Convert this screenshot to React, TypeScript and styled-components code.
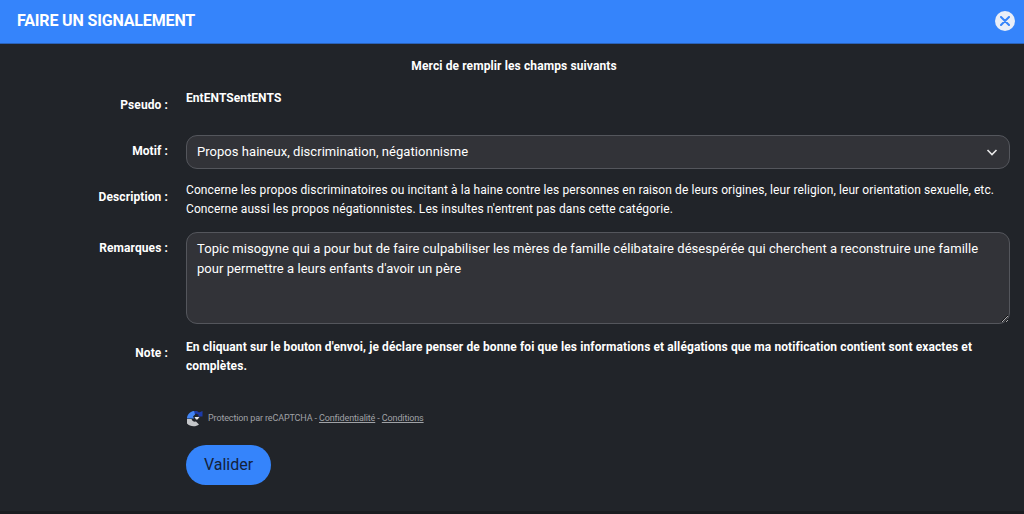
import React from "react";
import styled, { createGlobalStyle } from "styled-components";

const Global = createGlobalStyle`
  html, body { margin: 0; padding: 0; background: #1a1c20; }
  body { font-family: Roboto, "Liberation Sans", sans-serif; color: #fff; overflow: hidden; }
  * { box-sizing: border-box; }
`;

const Modal = styled.div`
  width: 1024px;
  height: 511px;
  background: #212429;
  display: flex;
  flex-direction: column;
`;

const Header = styled.header`
  height: 44px;
  background: #3584fb;
  border-bottom: 1px solid #2a62b8;
  display: flex;
  align-items: center;
  justify-content: space-between;
  padding: 0 9px 1px 17px;
`;

const Title = styled.h1`
  margin: 0;
  font-size: 16px;
  font-weight: 700;
  line-height: 20px;
  letter-spacing: -0.15px;
  color: #fff;
`;

const Close = styled.button`
  width: 20px;
  height: 20px;
  padding: 0;
  border: 0;
  border-radius: 50%;
  background: #e9eef8;
  display: flex;
  align-items: center;
  justify-content: center;
`;

const Body = styled.div`
  display: flex;
  flex-direction: column;
  padding-top: 15px;
`;

const Intro = styled.p`
  margin: 0 0 17px;
  padding-left: 4px;
  font-size: 12px;
  line-height: 15px;
  font-weight: 700;
  letter-spacing: 0.11px;
  text-align: center;
`;

const Row = styled.div<{ $h: number; $mb: number }>`
  display: grid;
  grid-template-columns: 168px 824px;
  column-gap: 18px;
  height: ${(p) => p.$h}px;
  margin-bottom: ${(p) => p.$mb}px;
`;

const Label = styled.div<{ $top: number }>`
  font-size: 12px;
  font-weight: 700;
  line-height: 15px;
  letter-spacing: 0.1px;
  text-align: right;
  padding-top: ${(p) => p.$top}px;
`;

const Value = styled.div`
  font-size: 12px;
  font-weight: 700;
  line-height: 15px;
  letter-spacing: 0.07px;
`;

const SelectWrap = styled.div`
  position: relative;
  height: 34px;
`;

const Select = styled.select`
  width: 100%;
  height: 34px;
  appearance: none;
  background: #323338;
  border: 1px solid #54565c;
  border-radius: 11px;
  color: #fff;
  font: 400 13px/20px Roboto, sans-serif;
  letter-spacing: 0.04px;
  padding: 0 30px 0 10px;
  outline: none;
`;

const Chevron = styled.svg`
  position: absolute;
  top: 11px;
  right: 12px;
  pointer-events: none;
`;

const Desc = styled.div`
  font-size: 12px;
  line-height: 19px;
  letter-spacing: 0.09px;
  color: #fff;
`;

const Area = styled.textarea`
  display: block;
  width: 824px;
  height: 92px;
  background: #323338;
  border: 1px solid #54565c;
  border-radius: 11px;
  color: #fff;
  font: 400 13px/20px Roboto, sans-serif;
  letter-spacing: 0.05px;
  padding: 6px 10px;
  resize: vertical;
  outline: none;
`;

const Note = styled.div`
  font-size: 12px;
  font-weight: 700;
  line-height: 19px;
  letter-spacing: 0.1px;
`;

const Bottom = styled.div`
  margin-left: 186px;
  display: flex;
  flex-direction: column;
  align-items: flex-start;
`;

const Recaptcha = styled.div`
  display: flex;
  align-items: center;
  gap: 5px;
  height: 18px;
  font-size: 9px;
  letter-spacing: -0.13px;
  color: #a0a2a6;
`;

const Link = styled.a`
  color: #a0a2a6;
  text-decoration: underline;
`;

const Submit = styled.button`
  margin-top: 18px;
  width: 85px;
  height: 40px;
  border: 0;
  border-radius: 20px;
  background: #3584fb;
  color: #14213a;
  font: 400 16px/20px Roboto, sans-serif;
  padding: 0;
`;

export default function App() {
  return (
    <>
      <Global />
      <Modal>
        <Header>
          <Title>FAIRE UN SIGNALEMENT</Title>
          <Close aria-label="Fermer">
            <svg width="10" height="10" viewBox="0 0 10 10">
              <path d="M1 1l8 8M9 1l-8 8" stroke="#3584fb" strokeWidth="2" strokeLinecap="round" />
            </svg>
          </Close>
        </Header>
        <Body>
          <Intro>Merci de remplir les champs suivants</Intro>
          <Row $h={44} $mb={0}>
            <Label $top={7}>Pseudo :</Label>
            <Value>EntENTSentENTS</Value>
          </Row>
          <Row $h={34} $mb={12}>
            <Label $top={9}>Motif :</Label>
            <SelectWrap>
              <Select defaultValue="a">
                <option value="a">Propos haineux, discrimination, négationnisme</option>
              </Select>
              <Chevron width="12" height="12" viewBox="0 0 12 12">
                <path d="M1.500 4l4.500 4.500L10.500 4" fill="none" stroke="#e8e8e8" strokeWidth="1.600" />
              </Chevron>
            </SelectWrap>
          </Row>
          <Row $h={38} $mb={13}>
            <Label $top={9}>Description :</Label>
            <Desc>
              Concerne les propos discriminatoires ou incitant à la haine contre les personnes en raison de leurs origines, leur religion, leur orientation sexuelle, etc.
              <br />
              Concerne aussi les propos négationnistes. Les insultes n'entrent pas dans cette catégorie.
            </Desc>
          </Row>
          <Row $h={92} $mb={14}>
            <Label $top={9}>Remarques :</Label>
            <Area
              readOnly
              value={"Topic misogyne qui a pour but de faire culpabiliser les mères de famille célibataire désespérée qui cherchent a reconstruire une famille pour permettre a leurs enfants d'avoir un père"}
            />
          </Row>
          <Row $h={71} $mb={0}>
            <Label $top={8}>Note :</Label>
            <Note>
              En cliquant sur le bouton d'envoi, je déclare penser de bonne foi que les informations et allégations que ma notification contient sont exactes et complètes.
            </Note>
          </Row>
          <Bottom>
            <Recaptcha>
              <svg width="17" height="17" viewBox="0 0 17 17">
                <path d="M8 1H11L13 2.500 16.500 1V6.500H11.500L13 5 10 3.500 8 5Z" fill="#1c3aa9" />
                <path d="M1 8.500C1 5 3.500 1.500 8 1L9 4.500 7 6.500 8 8.500H1Z" fill="#4285f4" />
                <path d="M1 9H5.500C6 11 8 12 10 11.500L13 14.500C10 17 4 17 1 13.500Z" fill="#c4c6c9" />
                <path d="M8.500 7h5l-2 2.500H10z" fill="#e8e8ea" />
              </svg>
              <span>
                Protection par reCAPTCHA - <Link>Confidentialité</Link> - <Link>Conditions</Link>
              </span>
            </Recaptcha>
            <Submit>Valider</Submit>
          </Bottom>
        </Body>
      </Modal>
    </>
  );
}
